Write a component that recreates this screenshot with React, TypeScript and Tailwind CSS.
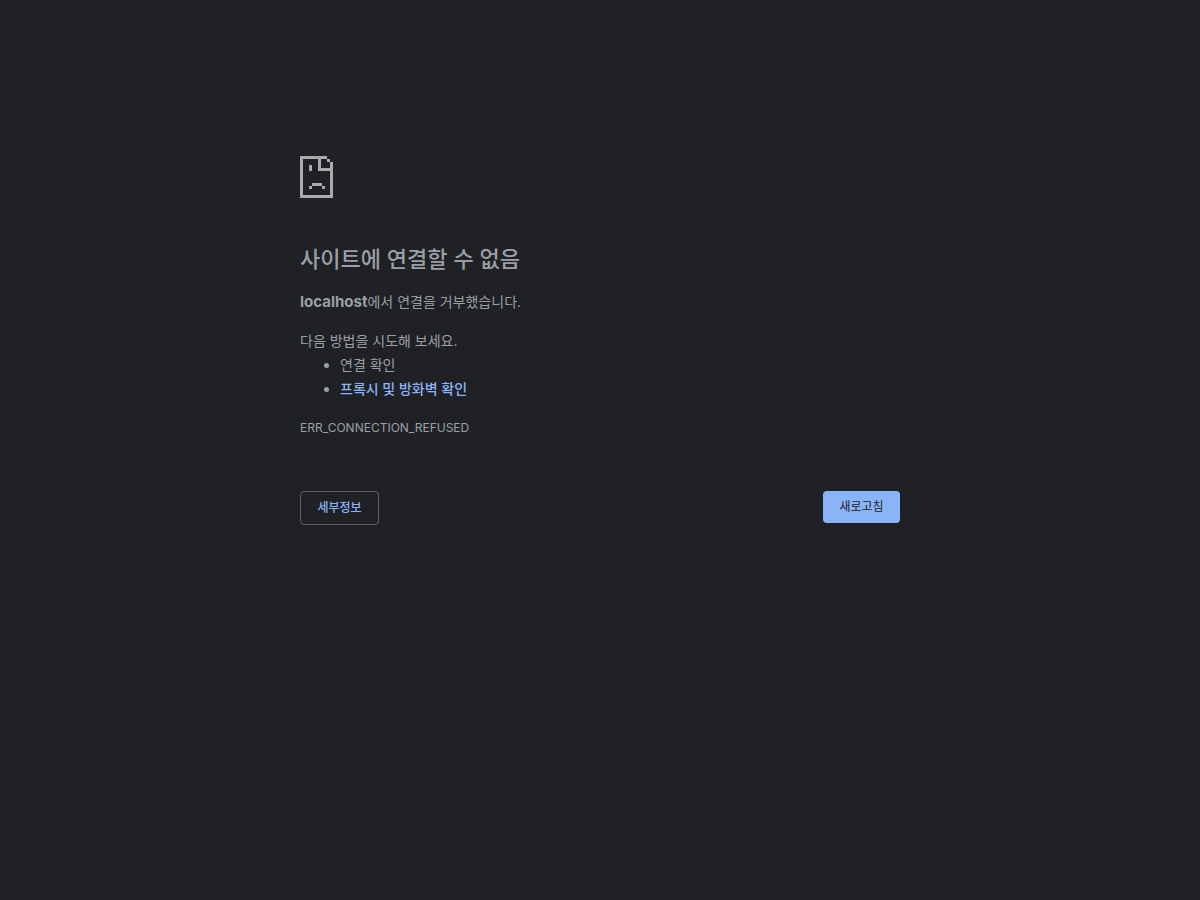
export default function App() {
  return (
    <div className="flex min-h-screen flex-col bg-[#202124] text-[#9aa0a6]">
      <main className="mx-auto w-full max-w-[600px] pt-[156px] font-['Inter','Noto_Sans_CJK_KR',sans-serif] text-[14px] leading-6">
        <svg className="block h-[42px] w-[33px]" viewBox="0 0 33 42" fill="#aaaaaa" shapeRendering="crispEdges" role="img" aria-label="오류">
          <path d="M0 0h27v3H3v36h27V15h3v27H0zM18 3h3v9h12v3H18zM27 3h3v3h-3zM30 6h3v9h-3zM9 9h3v6H9zM12 27h10v3H12zM9 30h3v3H9zM22 30h3v3h-3z" />
        </svg>
        <h1 className="mt-[46px] text-[22px] font-medium leading-[30px]">사이트에 연결할 수 없음</h1>
        <p className="mt-4"><strong className="text-[15px] font-bold">localhost</strong>에서 연결을 거부했습니다.</p>
        <p className="mt-[15px]">다음 방법을 시도해 보세요.</p>
        <ul className="list-disc pl-10">
          <li>연결 확인</li>
          <li><a href="#firewall" className="font-medium text-[#8ab4f8]">프록시 및 방화벽 확인</a></li>
        </ul>
        <p className="mt-[17px] text-[12px] leading-5">ERR_CONNECTION_REFUSED</p>
        <div className="mt-[53px] flex items-start justify-between text-[12px] leading-5">
          <button className="h-[34px] min-w-[79px] rounded border border-[#5f6368] px-4 font-medium text-[#8ab4f8]">세부정보</button>
          <button className="h-8 min-w-[77px] rounded bg-[#8ab4f8] px-4 text-[#202124]">새로고침</button>
        </div>
      </main>
    </div>
  );
}
